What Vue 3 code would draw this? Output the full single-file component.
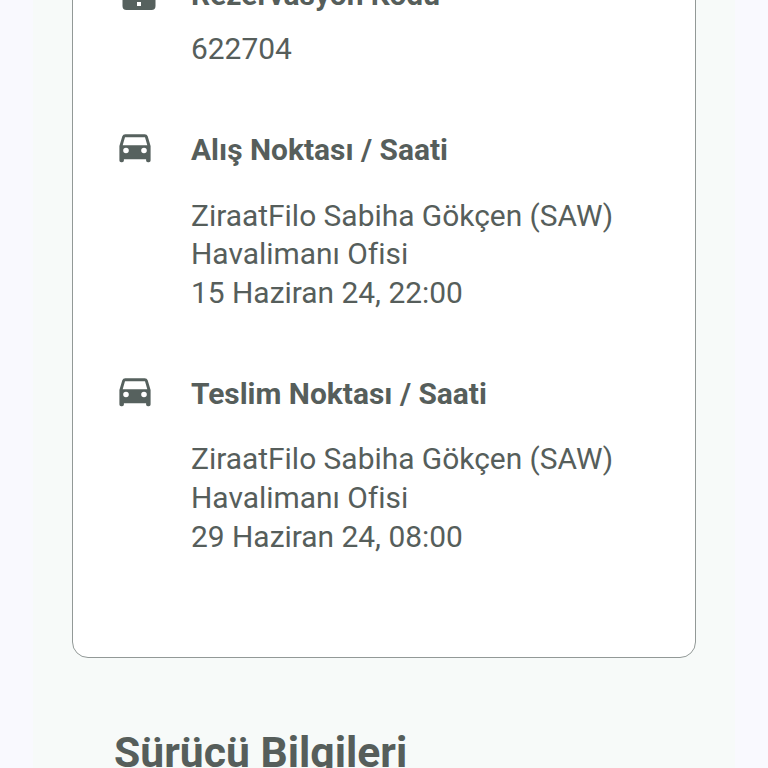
<template>
  <main class="page">
    <div class="sheet">
      <section class="card">
        <div v-for="item in items" :key="item.title" class="item" :class="item.icon">
          <svg v-if="item.icon === 'code'" class="icon" viewBox="0 0 34 32">
            <path fill-rule="evenodd" d="M4 0h26q3.500 0 3.500 3.500v23.500q0 4-4 4h-25q-4 0-4-4V3.500Q.5 0 4 0zM15 23v4h4v-4z" />
          </svg>
          <svg v-else class="icon" viewBox="0 0 32 29">
            <path fill-rule="evenodd" d="M3.300 2.300Q4 .2 6.300.2h19.400q2.300 0 3 2.100L31.600 12v14.500q0 1.800-1.800 1.800h-.9q-1.800 0-1.800-1.800v-1.300H4.900v1.300q0 1.800-1.800 1.800h-.9q-1.800 0-1.800-1.800V12zM6 3.200 3.700 11.300h24.600L26 3.200zM7 13.700a2.800 2.800 0 1 0 0 5.600 2.800 2.800 0 0 0 0-5.600zm18 0a2.800 2.800 0 1 0 0 5.600 2.800 2.800 0 0 0 0-5.600z" />
          </svg>
          <div class="body">
            <h3>{{ item.title }}</h3>
            <p v-for="line in item.lines" :key="line">{{ line }}</p>
          </div>
        </div>
      </section>
      <h2>Sürücü Bilgileri</h2>
    </div>
  </main>
</template>

<script setup>
const ofis = ['ZiraatFilo Sabiha Gökçen (SAW)', 'Havalimanı Ofisi']

const items = [
  { icon: 'code', title: 'Rezervasyon Kodu', lines: ['622704'] },
  { icon: 'car', title: 'Alış Noktası / Saati', lines: [...ofis, '15 Haziran 24, 22:00'] },
  { icon: 'car', title: 'Teslim Noktası / Saati', lines: [...ofis, '29 Haziran 24, 08:00'] },
]
</script>

<style>
body { margin: 0; overflow: hidden; }
</style>

<style scoped>
.page {
  height: 768px; overflow: hidden;
  background: #f9f9fe; color: #565e5b;
  font-family: Roboto, sans-serif;
  font-variant-ligatures: none;
}
.sheet { width: 702px; height: 768px; margin-left: 33px; background: #f7faf9; overflow: hidden; }
.card {
  box-sizing: border-box; width: 624px; height: 683px;
  margin: -25px 0 0 39px; padding: 0 46px;
  background: #fff; border: 1px solid #929997; border-radius: 16px;
}

.item { display: flex; height: 243.800px; }
.item.code { height: 155px; }

.icon { flex-shrink: 0; width: 32px; height: 29px; margin: 3px 40px 0 0; fill: #56615e; }
.code .icon { width: 34px; height: 32px; margin: 3px 35px 0 3px; }

h3 { margin: 0 0 27.700px; font-size: 29.920px; line-height: 38px; font-weight: 700; white-space: nowrap; }
.code h3 { margin-bottom: 16px; }
p { margin: 0; font-size: 29.920px; line-height: 38.600px; white-space: nowrap; }

h2 { margin: 68px 0 0 81px; font-size: 42.700px; line-height: 52px; font-weight: 700; }
</style>
